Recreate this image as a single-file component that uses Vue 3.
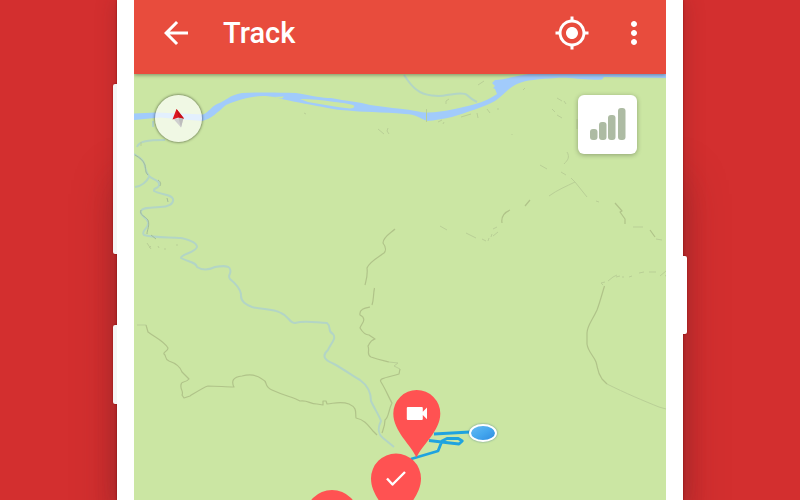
<script setup>
const signalBars = [
  { x: 12, y: 34 },
  { x: 21, y: 27 },
  { x: 30, y: 20 },
  { x: 40, y: 13 },
]
</script>

<template>
  <main class="stage">
    <div class="phone">
      <span class="key key-volume"></span>
      <span class="key key-side"></span>
      <span class="key key-power"></span>
      <section class="screen">
        <header class="app-bar">
          <button class="icon-button" type="button" aria-label="Back">
            <svg viewBox="0 0 24 24"><path d="M20 11H7.83l5.59-5.59L12 4l-8 8 8 8 1.41-1.41L7.83 13H20v-2z" /></svg>
          </button>
          <h1 class="title">Track</h1>
          <button class="icon-button" type="button" aria-label="My location">
            <svg viewBox="0 0 24 24"><path d="M12 8c-2.21 0-4 1.79-4 4s1.79 4 4 4 4-1.79 4-4-1.79-4-4-4zm8.94 3A8.994 8.994 0 0 0 13 3.06V1h-2v2.06A8.994 8.994 0 0 0 3.06 11H1v2h2.06A8.994 8.994 0 0 0 11 20.94V23h2v-2.06A8.994 8.994 0 0 0 20.94 13H23v-2h-2.06zM12 19c-3.87 0-7-3.13-7-7s3.13-7 7-7 7 3.13 7 7-3.13 7-7 7z" /></svg>
          </button>
          <button class="icon-button" type="button" aria-label="More options">
            <svg viewBox="0 0 24 24"><path d="M12 8c1.1 0 2-.9 2-2s-.9-2-2-2-2 .9-2 2 .9 2 2 2zm0 2c-1.1 0-2 .9-2 2s.9 2 2 2 2-.9 2-2-.9-2-2-2zm0 6c-1.1 0-2 .9-2 2s.9 2 2 2 2-.9 2-2-.9-2-2-2z" /></svg>
          </button>
        </header>

        <div class="map">
          <svg class="map-canvas" viewBox="134 74 532 426" preserveAspectRatio="xMidYMin slice" aria-hidden="true">
            <defs>
              <linearGradient id="dot" x1="0" y1="0" x2="1" y2="1">
                <stop offset="0" stop-color="#69bbf2" />
                <stop offset="0.5" stop-color="#45a8ee" />
                <stop offset="1" stop-color="#2c88de" />
              </linearGradient>
            </defs>

            <!-- main river -->
            <path class="water" d="M134 113.5 L156 112.5 L203 114.5 C209 112 211 107 217 104 C226 101 229 95 242 93 C258 92 280 92.500 296 93 C313 96 323 98 331 98 C346 101 360 102 370 105 C385 107 402 109 410 110 C417 111 422 113 428 112.500 C445 112 459 108 468 106 C481 103 490 99 497 94 L495 89 L493 88 L495 86 L492 83 L495 80 C507 79 515 76 529 74 H666 V78 L604 77 L602 79.500 C582 80.500 572 77 556 78 C540 79 525 80 517 84 C508 88 503 96 495 101 C482 108 467 112 452 117 C442 119 435 120.500 427 121 C419 118 416 114 405 114 C383 112 360 112 348 110.500 C337 110 332 109 323 107 C307 104 290 101 278 98 C266 95 255 96 247 98 C239 100 232 102 226 105 C218 112 211 119 202 121 L160 117.500 L134 120 Z" />
            <path class="land" d="M300 99 C312 99 322 100 331 101.500 C340 102.500 348 103.500 353 105 C355 106 355 108 350 108.500 C336 107 321 104 308 102 Z" />
            <path class="land" d="M271 97 L284 96.500 L282 98.500 Z" />

            <!-- streams -->
            <g class="stream">
              <path d="M404 75 C408 81 412 87 417 90 C424 96 439 97 447 95 C455 94 464 92 467 95 C470 98 473 100 477 102" />
              <path d="M134 154 C138 157 142 158 144 163 C146 168 145 172 149 176 C153 180 160 180 159 185 C159 189 153 187 154 191 C161 195 172 194 173 199 C174 204 168 207 160 207 C150 208 143 207 141 211 C139 216 147 217 148 222 C150 228 140 231 144 235 C155 238 169 237 181 238 C190 240 197 243 197 247 C195 253 181 254 181 258 C188 262 196 262 197 267 C203 271 209 270 215 267 C222 266 229 265 230 269 C232 274 227 275 230 279 C235 283 240 289 241 294 C240 302 247 305 252 307 C263 310 272 308 281 313 C289 316 289 323 295 323 C306 320 317 323 327 323 C332 327 327 332 333 334 C337 339 330 344 328 350 C320 357 327 361 334 364 C345 370 354 377 360 380 C367 385 371 393 371 401 C374 408 379 415 381 421 C377 429 379 435 383 438 L394 447" />
              <path d="M135 187 C142 186 147 181 149 177 M137 147 C139 141 148 140 165 140 M153 121 V127" />
            </g>

            <!-- trails -->
            <g class="trail">
              <path class="faint" d="M137 325 h9" />
              <path d="M146 325 L148 332 C156 338 164 341 168 348 C168 352 163 351 164 354 C167 356 164 359 169 361 C175 363 180 366 182 372 L189 379 C185 384 181 380 181 385 C180 389 184 392 182 395 L184 398 L190 396 C198 391 204 387 208 386 C218 386 225 387 234 387 C231 381 233 377 242 376 C250 374 257 375 262 379 C269 382 263 386 272 390 C285 396 293 397 300 401 C309 400 309 404 317 404 L323 405 L323 401 L326 401 L327 404 C336 403 341 401 349 404 C358 408 355 413 356 418 C365 420 368 425 373 431 L377 435" />
              <path d="M395 229 C391 233 383 237 383 243 C386 247 386 251 384 253 C377 258 369 262 367 268 C368 275 366 281 365 285 M374.500 288 C373 295 374 299 372 305 M370 307 C365 308 359 309 360 315 C368 319 361 324 360 328 C363 333 366 335 369 335 L375 339 C369 341 370 344 368 346 C370 351 366 355 371 357 C380 360 386 361 389 362 M400 369 L399 374 C390 377 378 378 381 382 C386 390 389 398 392 403 C388 411 389 417 385 420 C385 426 383 430 382 433" />
              <path class="faint" d="M389 362 L398 363 L394 366 L400 369" />
              <path d="M604.500 286 C602 294 600 302 597 310 C592 321 587 326 587 333 V344 C588 352 594 356 596 362 C598 368 597 372 602 379 L607 384" />
              <path class="faint" d="M607 384 C625 393 644 401 659 407 L666 409" />
              <path class="faint" d="M603 285 L601 283 L605 282 M608 281 L613 277 L617 275 M616 277 l4 -1 m2 1 l2 0 m5 0 l3 -1 m7 -3 l5 -1 m5 0 l7 0 m4 4 l6 -5 m-1 5 l7 -4" />
              <path class="faint" d="M440 226 l7 4 M466 233 L476 238 M482 239 l4 2 m2 0 l1 -3 m2 -1 l1 -3 m1 -5 l4 -2 m1 5 l-5 4" />
              <path d="M502 223 C501 217 503 213 510 210 M525 206 L530 200 M615 203 L622 211 L620 212 L625 219 L625 224 M650 230 L655 237" />
              <path class="faint" d="M549 196 C557 190 567 186 575 182 L571 178 M575 182 L587 197 M596 201 l3 1 M540 165 l7 4 M561 172 l5 3 M633 227 h10 M656 239 l6 1" />
              <path class="faint" d="M567 152 C570 157 568 160 564 164 M557 98 l5 3 m2 0 l2 3 M552 109 l3 3 m2 3 l5 3 M577 119 v10 M523 90 l2 -2 m-13 46 l0 1 M426.500 109 V122 M446 104 v-3 l3 -2 M478 85 l6 -4 M477 113 l1 5 M487 109 l3 4 m8 -5 v2 M442 120 l-4 2 m6 0 l-1 2 M378 129 l6 5 M388 128 l-1 3 l2 3 M304 113 l2 1 M141 142 v4 M461 117 l10 -3" />
              <path class="bank" d="M135 155 C140 158 143 160 145 165 C146 170 145 172 148 175 M158 180 C161 182 161 184 160 186 M167 198 l1 4 M141 210 C139 215 145 216 148 220 C150 226 147 230 147 234 M151 235 l5 4" />
              <path class="faint" d="M147 243 l4 6 m-2 -1 l2 -2 m7 0 l1 2 m5 1 l2 0 m10 -4 l2 0" />
            </g>

            <!-- recorded route -->
            <path class="route" d="M434 434 L470 432 M429 440.500 L450 443 L459 444 L462.300 441 L458.300 438.500 H447 L442 441 L438 451 L411 459" />
            <ellipse class="position" cx="483" cy="433" rx="13" ry="8" fill="url(#dot)" />

            <!-- waypoints -->
            <g class="pin">
              <path d="M332 556 C328 544 305.500 535 305.500 516.500 a26.500 26.500 0 0 1 53 0 C358.500 535 336 544 332 556 Z" />
              <path d="M416.500 457.500 C411 445 393.300 431 393.300 413.500 a23.500 23.500 0 0 1 47 0 C440.300 431 422 445 416.500 457.500 Z" />
              <path d="M396 525 C390 512 371 497 371 478.500 a25 25 0 0 1 50 0 C421 497 402 512 396 525 Z" />
            </g>
            <path fill="#fff" d="M407.800 407 h14 q1 0 1 1 v3.800 l4.200 -4.200 v11.600 l-4.200 -4.200 v4 q0 1 -1 1 h-14 q-1 0 -1 -1 v-11 q0 -1 1 -1 Z" />
            <path class="check" d="M387 478.500 L392.500 484.500 L405 472" />
          </svg>

          <div class="controls">
            <button class="compass" type="button" aria-label="Compass">
              <svg viewBox="0 0 47 47">
                <path fill="#cfcfcf" d="M18.500 24 L28.500 23 L26 32.500 Z" />
                <path fill="#bdbdbd" d="M23.500 23 L28.500 23 L26 32.500 Z" />
                <path fill="#dc1620" d="M21.500 14 L29 23.500 L23.500 22.500 L17.500 24.500 Z" />
                <path fill="#c80f19" d="M21.500 14 L29 23.500 L23.500 22.500 Z" />
              </svg>
            </button>
            <button class="signal" type="button" aria-label="Signal strength">
              <svg viewBox="0 0 59 59">
                <rect v-for="bar in signalBars" :key="bar.x" :x="bar.x" :y="bar.y" width="7.500" :height="45 - bar.y" rx="3" />
              </svg>
            </button>
          </div>
        </div>
      </section>
    </div>
  </main>
</template>

<style>
body {
  margin: 0;
  background: #d32f2f;
}
</style>

<style scoped>
.stage {
  display: flex;
  justify-content: center;
  height: 100vh;
  overflow: hidden;
  background: #d32f2f;
  font-family: Roboto, "Liberation Sans", sans-serif;
}

.phone {
  position: relative;
  box-sizing: border-box;
  display: flex;
  width: 100%;
  max-width: 566px;
  padding: 0 17px;
  background: #fff;
  box-shadow:
    0 0 2px rgba(120, 0, 0, 0.7),
    0 0 20px rgba(90, 30, 35, 0.3),
    0 180px 40px rgba(90, 30, 35, 0.35);
}

.key {
  position: absolute;
  width: 4px;
  background: #f5f5f5;
  box-shadow: 0 0 2px rgba(120, 0, 0, 0.7);
}

.key-volume {
  top: 84px;
  right: 100%;
  height: 170px;
  border-radius: 2px 0 0 2px;
  clip-path: inset(-2px 0 -2px -2px);
}

.key-side {
  top: 325px;
  right: 100%;
  height: 79px;
  border-radius: 2px 0 0 2px;
  clip-path: inset(-2px 0 -2px -2px);
}

.key-power {
  top: 256px;
  left: 100%;
  height: 78px;
  background: #fff;
  border-radius: 0 2px 2px 0;
  clip-path: inset(-2px -2px -2px 0);
}

.screen {
  display: flex;
  flex: 1;
  flex-direction: column;
  min-width: 0;
}

.app-bar {
  position: relative;
  z-index: 1;
  display: flex;
  align-items: center;
  padding: 14px 14px 22px 24px;
  background: #e84c3d;
  box-shadow: 0 1px 4px rgba(0, 0, 0, 0.4);
  clip-path: inset(0 0 -8px 0);
  color: #fff;
}

.icon-button {
  width: 36px;
  height: 36px;
  padding: 0;
  border: 0;
  background: none;
  color: inherit;
}

.icon-button svg {
  display: block;
  fill: currentColor;
}

.icon-button + .icon-button {
  margin-left: 26px;
}

.title {
  flex: 1;
  margin: 0 0 0 29px;
  font-size: 29px;
  font-weight: 500;
  line-height: 38px;
}

.map {
  position: relative;
  flex: 1;
  min-height: 0;
  overflow: hidden;
  background: #cbe6a3;
}

.map-canvas {
  position: absolute;
  inset: 0;
  width: 100%;
  height: 100%;
}

.map-canvas path {
  stroke-linejoin: round;
}

.water {
  fill: #a1cbfb;
}

.land {
  fill: #cbe6a3;
}

.stream {
  fill: none;
  stroke: #b3d5c5;
  stroke-width: 2px;
}

.trail {
  fill: none;
  stroke: #b0c389;
  stroke-width: 1.2px;
}

.faint {
  stroke: #b9cf96;
  stroke-width: 1px;
}

.bank {
  stroke: #a3bd98;
  stroke-width: 1px;
}

.route {
  fill: none;
  stroke: #1fa3df;
  stroke-width: 2.8px;
}

.position {
  stroke: #fff;
  stroke-width: 2px;
  filter: drop-shadow(0 0 1px rgba(40, 100, 130, 0.6));
}

.pin {
  fill: #ff5252;
}

.check {
  fill: none;
  stroke: #fff;
  stroke-width: 2.4px;
}

.controls {
  position: relative;
  display: flex;
  align-items: flex-start;
  justify-content: space-between;
  padding: 21px 29px 0 21px;
}

.compass {
  width: 47px;
  height: 47px;
  padding: 0;
  border: 0;
  border-radius: 50%;
  background: rgba(255, 255, 255, 0.7);
  box-shadow: 0 0 3px rgba(0, 0, 0, 0.7);
}

.compass svg {
  display: block;
}

.signal {
  width: 59px;
  height: 59px;
  padding: 0;
  border: 0;
  border-radius: 6px;
  background: #fff;
  box-shadow: 0 1px 5px rgba(0, 0, 0, 0.3);
}

.signal svg {
  display: block;
  fill: #adbba3;
}
</style>
